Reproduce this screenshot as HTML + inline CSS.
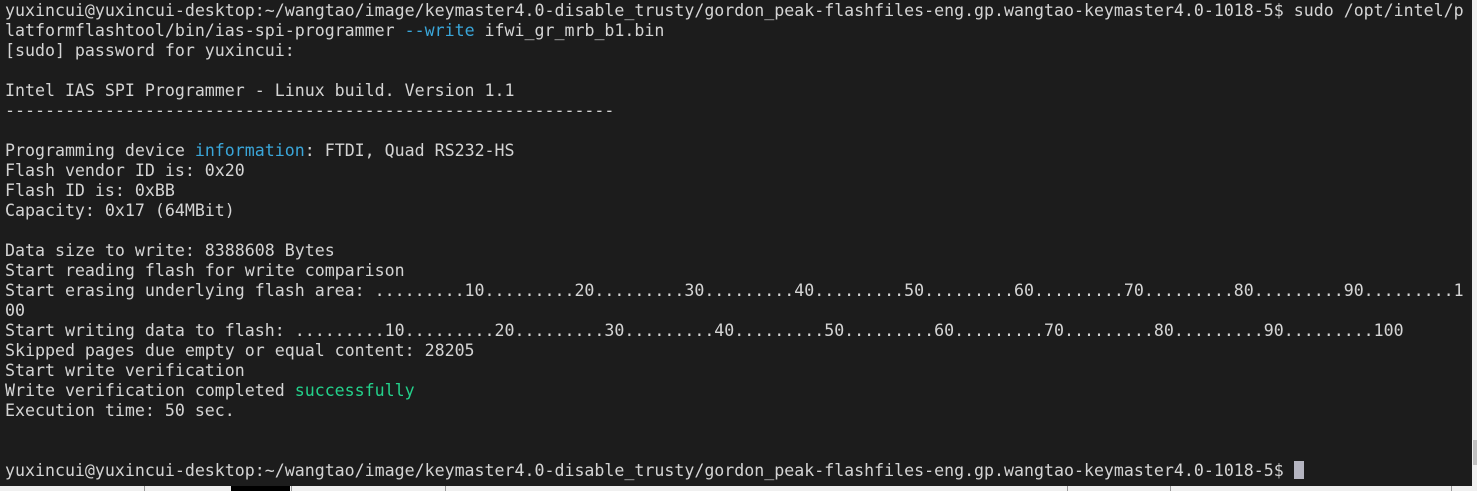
<!DOCTYPE html>
<html><head><meta charset="utf-8"><style>
html,body{margin:0;padding:0;width:1477px;height:491px;overflow:hidden;background:#1c1c1c}
pre{margin:0;position:absolute;left:5px;top:1px;font-family:"DejaVu Sans Mono","Liberation Mono",monospace;font-size:16.6px;line-height:20px;color:#d4d4d4;white-space:pre}
.c{color:#3aa6d9}.g{color:#23d18b}
.cur{display:inline-block;width:10px;height:18px;background:#b4b4c0;vertical-align:-3px}
#sb{position:absolute;left:1472px;top:0;width:5px;height:486px;background:#f0f0f0}
#th{position:absolute;left:1473px;top:440px;width:4px;height:25px;background:#c2c2c2}
#bar{position:absolute;left:0;top:486px;width:1477px;height:5px;background:#f0f0f0}
.s{position:absolute;top:486px;width:1px;height:5px;background:#999}
#blk{position:absolute;left:231px;top:486px;width:59px;height:5px;background:#000}
</style></head><body>
<pre>yuxincui@yuxincui-desktop:~/wangtao/image/keymaster4.0-disable_trusty/gordon_peak-flashfiles-eng.gp.wangtao-keymaster4.0-1018-5$ sudo /opt/intel/p
latformflashtool/bin/ias-spi-programmer <span class="c">--write</span> ifwi_gr_mrb_b1.bin
[sudo] password for yuxincui:

Intel IAS SPI Programmer - Linux build. Version 1.1
-------------------------------------------------------------

Programming device <span class="c">information</span>: FTDI, Quad RS232-HS
Flash vendor ID is: 0x20
Flash ID is: 0xBB
Capacity: 0x17 (64MBit)

Data size to write: 8388608 Bytes
Start reading flash for write comparison
Start erasing underlying flash area: .........10.........20.........30.........40.........50.........60.........70.........80.........90.........1
00
Start writing data to flash: .........10.........20.........30.........40.........50.........60.........70.........80.........90.........100
Skipped pages due empty or equal content: 28205
Start write verification
Write verification completed <span class="g">successfully</span>
Execution time: 50 sec.


yuxincui@yuxincui-desktop:~/wangtao/image/keymaster4.0-disable_trusty/gordon_peak-flashfiles-eng.gp.wangtao-keymaster4.0-1018-5$ <span class="cur"></span></pre>
<div id="sb"></div><div id="th"></div>
<div id="bar"></div>
<div class="s" style="left:144px"></div>
<div id="blk"></div>
<div class="s" style="left:291px"></div>
<div class="s" style="left:445px"></div>
<div class="s" style="left:1067px"></div>
<div class="s" style="left:1170px"></div>
<div class="s" style="left:1451px"></div>
</body></html>
